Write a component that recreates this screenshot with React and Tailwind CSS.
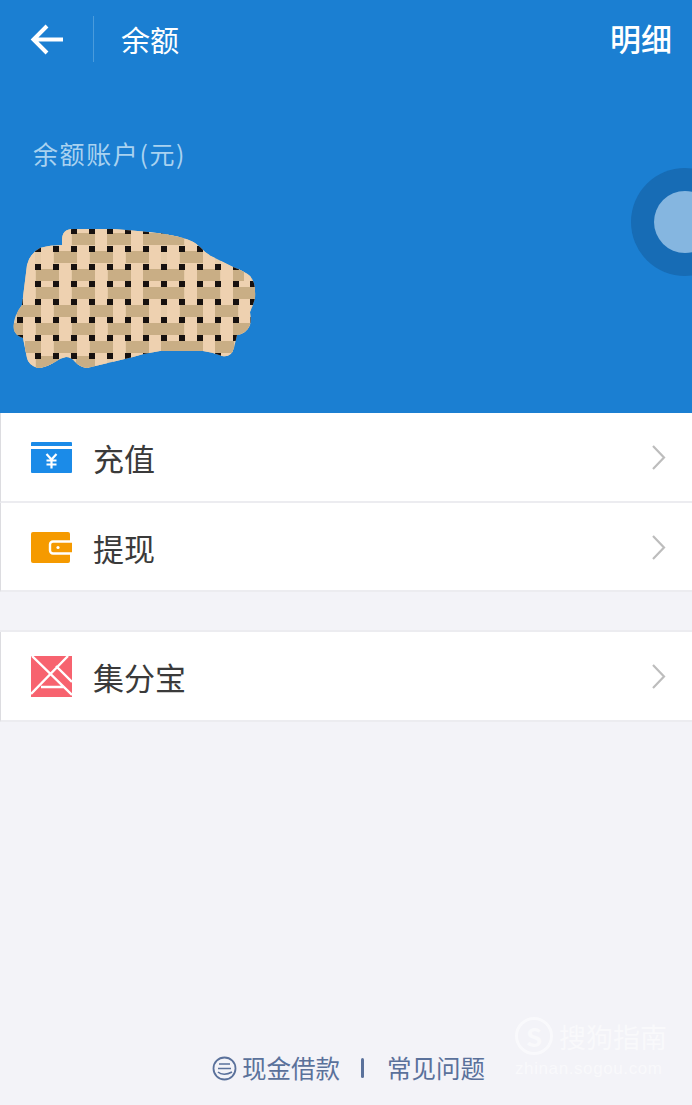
import React from 'react';

const FONT = "font-['Noto_Sans_CJK_SC','Noto_Sans',sans-serif]";

// tan strips of the weave: [y, x1, x2]
const strips = [
  [239, [[72, 95], [107, 131], [143, 184]]],
  [257, [[54, 77], [90, 113], [126, 149], [180, 203]]],
  [275, [[36, 59], [72, 95], [108, 131], [143, 184], [197, 220], [233, 244]]],
  [293, [[36, 59], [72, 95], [108, 131], [143, 184], [197, 220], [233, 256]]],
  [311, [[17, 41], [54, 77], [90, 113], [126, 149], [180, 203], [215, 238]]],
  [329, [[12, 23], [36, 59], [72, 95], [108, 131], [143, 184], [197, 220], [233, 250]]],
  [347, [[25, 41], [54, 77], [90, 113], [126, 149], [161, 203], [215, 234]]],
  [362, [[36, 59], [76, 95]]],
];

const lightBars = [29, 47, 65, 83, 101, 119, 137, 155, 173, 191, 209, 227, 245];
const dotCols = [20, 38, 56, 74, 92, 110, 128, 146, 164, 182, 200, 218, 236, 253];
const dotRows = [231, 249, 267, 284, 302, 320, 338, 356];

const BLOB =
  'M62 240 Q62 229 73 229 L113 229 Q140 231 157 233 Q172 235 183 238 Q194 241 200 247 Q206 254 213 257 L233 267 Q244 271 250 276 Q256 282 255 298 Q253 306 250 312 Q251 320 250 325 Q246 334 237 335 L234 348 Q231 358 222 356 Q212 352 203 351 L160 351 Q146 353 133 357 L87 368 Q80 367 75 362 Q71 357 66 357 Q60 358 55 362 Q45 368 37 368 Q28 364 27 358 L23 338 Q15 335 14 330 Q12 318 22 305 L27 265 Q30 253 40 248 Q50 245 62 245 Z';

// the scribbled-over balance amount
function Scribble() {
  return (
    <svg width="270" height="165" viewBox="0 215 270 165" className="block">
      <defs>
        <clipPath id="blob">
          <path d={BLOB} />
        </clipPath>
      </defs>
      <g clipPath="url(#blob)">
        <rect x="0" y="215" width="270" height="165" fill="#e6cba8" />
        {lightBars.map((x) => (
          <rect key={x} x={x - 6} y="215" width="12" height="165" fill="#eed1b0" />
        ))}
        {strips.map(([y, parts]) =>
          parts.map(([a, b]) => (
            <rect key={`${y}-${a}`} x={a} y={y - 6} width={b - a} height="12" fill="#c9ae85" />
          ))
        )}
        {dotRows.map((y) =>
          dotCols.map((x) => (
            <rect key={`${x}-${y}`} x={x - 3} y={y - 3} width="6" height="6" fill="#17110f" />
          ))
        )}
      </g>
    </svg>
  );
}

function CardIcon() {
  return (
    <svg width="41" height="31" viewBox="0 0 41 31" className="block">
      <path d="M1 0h39a1 1 0 0 1 1 1v3H0V1a1 1 0 0 1 1-1z" fill="#1b8be8" />
      <path d="M0 7h41v23a1 1 0 0 1-1 1H1a1 1 0 0 1-1-1z" fill="#1b8be8" />
      <path d="M15.500 12l5 5.500 5-5.500M20.500 17.500v9M15.500 18.500h10M15.500 22.500h10" stroke="#fff" strokeWidth="2.200" fill="none" />
    </svg>
  );
}

function WalletIcon() {
  return (
    <svg width="41" height="31" viewBox="0 0 41 31" className="block">
      <rect x="0" y="0" width="39" height="31" rx="2" fill="#f59a00" />
      <path d="M41 9.500H22a3 3 0 0 0-3 3v6a3 3 0 0 0 3 3h19" fill="#f59a00" stroke="#fff" strokeWidth="2.400" />
      <circle cx="27" cy="15.500" r="1.600" fill="#fff" />
    </svg>
  );
}

function TangramIcon() {
  return (
    <svg width="41" height="41" viewBox="0 0 41 41" className="block">
      <rect width="41" height="41" fill="#f7636f" />
      <path d="M1 0L41 39M37 0L0 38M25 10L41 26M10 31H33" stroke="#fff" strokeWidth="2.400" fill="none" />
    </svg>
  );
}

function Chevron() {
  return (
    <svg width="15" height="27" viewBox="0 0 15 27" className="block">
      <path d="M2 2l11 11.500L2 25" stroke="#bdbdbd" strokeWidth="2.200" fill="none" />
    </svg>
  );
}

function Row({ icon, label }) {
  return (
    <div className="flex h-[89.5px] shrink-0 items-center border-b-2 border-l border-b-[#ececf0] border-l-[#dcdce0] bg-white pl-[30px] pr-[26px] pt-[2px]">
      <div className="flex w-[62px] items-center">{icon}</div>
      <span className="flex-1 text-[31px] leading-none text-[#3a3a3a]">{label}</span>
      <Chevron />
    </div>
  );
}

export default function App() {
  return (
    <div className={`relative flex h-[1105px] w-[692px] flex-col overflow-hidden bg-[#f3f3f8] ${FONT}`}>
      {/* Blue header */}
      <div className="relative h-[413px] shrink-0 overflow-hidden bg-[#1b7fd2]">
        <div className="flex items-start justify-between pr-[20px] pt-[16px]">
          <div className="flex h-[46px] items-center">
            <div className="flex w-[93px] justify-center pr-[28px] pl-[30px]">
              <svg width="35" height="33" viewBox="0 0 35 33" className="block">
                <path d="M33 16.500H4M17 3L3.500 16.500L17 30" stroke="#fff" strokeWidth="4" fill="none" />
              </svg>
            </div>
            <div className="h-[46px] w-px bg-[#4a9bdc]" />
            <span className="ml-[27px] text-[29px] leading-none text-white">余额</span>
          </div>
          <span className="mt-[2px] text-[31px] font-medium leading-[40px] text-white">明细</span>
        </div>
        <div className="ml-[33px] mt-[79px] text-[25px] leading-none tracking-[1.6px] text-[#a9d2f0]">余额账户(元)</div>
        <div className="mt-[49px]">
          <Scribble />
        </div>
        <div className="absolute left-[631px] top-[168px] flex h-[108px] w-[108px] items-center justify-center rounded-full bg-[#176cb5]">
          <div className="h-[62px] w-[62px] rounded-full bg-[#85b6e0]" />
        </div>
      </div>

      <Row icon={<CardIcon />} label="充值" />
      <Row icon={<WalletIcon />} label="提现" />
      <div className="h-[40px] shrink-0 border-b-2 border-[#ececf0]" />
      <Row icon={<TangramIcon />} label="集分宝" />

      {/* Footer links */}
      <div className="mt-auto mb-[22px] flex h-[30px] items-center pl-[212px] text-[24.500px] leading-none text-[#5a719b]">
        <svg width="25" height="25" viewBox="0 0 25 25" className="mr-[5px] block">
          <circle cx="12.500" cy="12.500" r="11" fill="none" stroke="#5a719b" strokeWidth="1.800" />
          <path d="M7 8h11M6 12.500h13M6 16c3 3 9 3 14 0" fill="none" stroke="#5a719b" strokeWidth="1.600" />
        </svg>
        <span>现金借款</span>
        <span className="ml-[21px] h-[20px] w-[3px] rounded-sm bg-[#5a719b]" />
        <span className="ml-[23px]">常见问题</span>
      </div>

      {/* Watermark */}
      <div className="absolute left-[515px] top-[1017px] w-[160px] text-white/50">
        <div className="flex items-center">
          <div className="flex h-[38px] w-[38px] items-center justify-center rounded-full border-[3px] border-white/50 text-[26px] font-bold leading-none">
            S
          </div>
          <span className="ml-[6px] text-[27px] leading-none">搜狗指南</span>
        </div>
        <div className="mt-[5px] font-['Liberation_Sans',sans-serif] text-[17px] leading-none tracking-[0.6px]">zhinan.sogou.com</div>
      </div>
    </div>
  );
}
